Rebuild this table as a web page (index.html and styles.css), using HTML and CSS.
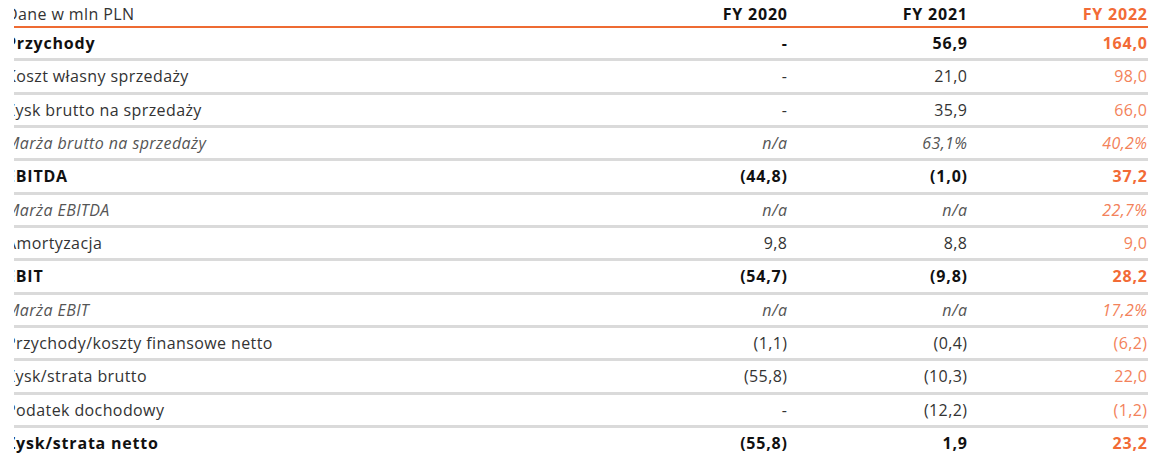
FILE: index.html
```html
<!DOCTYPE html>
<html lang="pl">
<head>
<meta charset="utf-8">
<title>Dane w mln PLN</title>
<link rel="stylesheet" href="styles.css">
</head>
<body>
<div class="table">
  <div class="row head">
    <div class="label"><span>Dane w mln PLN</span></div>
    <div class="num">FY 2020</div>
    <div class="num">FY 2021</div>
    <div class="num hl">FY 2022</div>
  </div>
  <div class="row bold">
    <div class="label"><span>Przychody</span></div>
    <div class="num">-</div>
    <div class="num">56,9</div>
    <div class="num hl">164,0</div>
  </div>
  <div class="row">
    <div class="label"><span>Koszt własny sprzedaży</span></div>
    <div class="num">-</div>
    <div class="num">21,0</div>
    <div class="num hl">98,0</div>
  </div>
  <div class="row">
    <div class="label"><span>Zysk brutto na sprzedaży</span></div>
    <div class="num">-</div>
    <div class="num">35,9</div>
    <div class="num hl">66,0</div>
  </div>
  <div class="row ital">
    <div class="label"><span>Marża brutto na sprzedaży</span></div>
    <div class="num">n/a</div>
    <div class="num">63,1%</div>
    <div class="num hl">40,2%</div>
  </div>
  <div class="row bold">
    <div class="label"><span>EBITDA</span></div>
    <div class="num">(44,8)</div>
    <div class="num">(1,0)</div>
    <div class="num hl">37,2</div>
  </div>
  <div class="row ital">
    <div class="label"><span>Marża EBITDA</span></div>
    <div class="num">n/a</div>
    <div class="num">n/a</div>
    <div class="num hl">22,7%</div>
  </div>
  <div class="row">
    <div class="label"><span>Amortyzacja</span></div>
    <div class="num">9,8</div>
    <div class="num">8,8</div>
    <div class="num hl">9,0</div>
  </div>
  <div class="row bold">
    <div class="label"><span>EBIT</span></div>
    <div class="num">(54,7)</div>
    <div class="num">(9,8)</div>
    <div class="num hl">28,2</div>
  </div>
  <div class="row ital">
    <div class="label"><span>Marża EBIT</span></div>
    <div class="num">n/a</div>
    <div class="num">n/a</div>
    <div class="num hl">17,2%</div>
  </div>
  <div class="row">
    <div class="label"><span>Przychody/koszty finansowe netto</span></div>
    <div class="num">(1,1)</div>
    <div class="num">(0,4)</div>
    <div class="num hl">(6,2)</div>
  </div>
  <div class="row">
    <div class="label"><span>Zysk/strata brutto</span></div>
    <div class="num">(55,8)</div>
    <div class="num">(10,3)</div>
    <div class="num hl">22,0</div>
  </div>
  <div class="row">
    <div class="label"><span>Podatek dochodowy</span></div>
    <div class="num">-</div>
    <div class="num">(12,2)</div>
    <div class="num hl">(1,2)</div>
  </div>
  <div class="row bold last">
    <div class="label"><span>Zysk/strata netto</span></div>
    <div class="num">(55,8)</div>
    <div class="num">1,9</div>
    <div class="num hl">23,2</div>
  </div>
</div>
</body>
</html>
```

FILE: styles.css
```css
html, body {
  margin: 0;
  padding: 0;
  background: #ffffff;
}

body {
  font-family: "Open Sans", "Noto Sans", "Liberation Sans", sans-serif;
  font-size: 16px;
  letter-spacing: 0.4px;
  color: #333333;
}

.table {
  margin-left: 14px;
  width: 1134px;
}

.row {
  display: grid;
  grid-template-columns: 1fr 180px 180px 180px;
  padding-right: 1px;
  align-items: center;
  height: 30.33px;
  border-bottom: 3px solid #dadada;
}

.row.head {
  height: 26px;
  border-bottom: 2px solid #ee6b33;
  align-items: end;
}

.row.head .label,
.row.head .num {
  padding-bottom: 1px;
}

.row.head .num {
  font-weight: 700;
  letter-spacing: 0.8px;
  color: #111111;
}

.label {
  overflow: hidden;
  white-space: nowrap;
}

.label span {
  display: inline-block;
  margin-left: -8px;
}

.num {
  text-align: right;
  white-space: nowrap;
  margin-right: -0.4px;
}

.hl {
  color: #f3825a;
}

.row.head .num.hl,
.row.bold .num.hl {
  color: #f26b36;
}

.bold {
  font-weight: 700;
  letter-spacing: 0.8px;
  color: #111111;
}

.bold .num,
.row.head .num {
  margin-right: -0.8px;
}

.ital {
  font-style: italic;
  color: #555555;
}

.last {
  border-bottom: none;
}
```
